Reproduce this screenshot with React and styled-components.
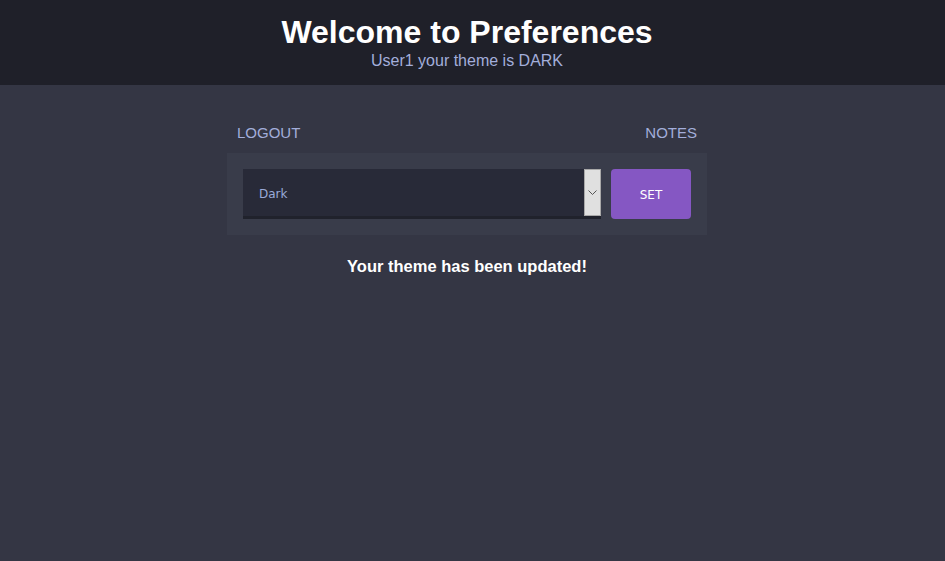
import React, { useState } from "react";
import styled, { createGlobalStyle } from "styled-components";

const GlobalStyle = createGlobalStyle`
  html, body {
    margin: 0;
    padding: 0;
    height: 100%;
    background: #343644;
    font-family: "Liberation Sans", Arial, sans-serif;
  }
  #root {
    min-height: 100%;
  }
`;

// content column sits 11px left of the window centre, as in the reference
const Header = styled.header`
  background: #1f2029;
  height: 85px;
  box-sizing: border-box;
  padding: 14px 11px 0 0;
  text-align: center;
`;

const Title = styled.h1`
  margin: 0;
  font-size: 32px;
  line-height: 37px;
  font-weight: bold;
  color: #ffffff;
`;

const Subtitle = styled.p`
  margin: 1px 0 0;
  font-size: 16px;
  line-height: 18px;
  color: #a3aedb;
`;

const Body = styled.div`
  padding-right: 11px;
`;

const Main = styled.main`
  width: 480px;
  margin: 0 auto;
  padding-top: 28px;
`;

const Nav = styled.nav`
  display: flex;
  justify-content: space-between;
  padding: 11px 10px 11px;
`;

const NavLink = styled.a`
  font-size: 15px;
  line-height: 18px;
  color: #a3aedb;
  text-decoration: none;
  cursor: pointer;
`;

const Panel = styled.form`
  display: flex;
  gap: 10px;
  padding: 16px;
  background: #393c4a;
`;

const SelectWrap = styled.div`
  position: relative;
  flex: 1;
  height: 50px;
  box-sizing: border-box;
  border-bottom: 3px solid #20222c;
  background: #282a38;
`;

const Select = styled.select`
  appearance: none;
  width: 100%;
  height: 100%;
  border: none;
  outline: none;
  background: transparent;
  padding: 2px 0 0 16px;
  font-family: "DejaVu Sans", Verdana, sans-serif;
  font-size: 12px;
  color: #9aaad8;
`;

const Arrow = styled.span`
  position: absolute;
  top: 0;
  right: 0;
  bottom: 0;
  width: 17px;
  box-sizing: border-box;
  border: 1px solid #a9a9a9;
  background: #e0e0e0;
  display: flex;
  align-items: center;
  justify-content: center;
  pointer-events: none;
`;

const SetButton = styled.button`
  width: 80px;
  height: 50px;
  border: none;
  border-radius: 4px;
  background: #8557c3;
  color: #ffffff;
  font-family: "DejaVu Sans", Verdana, sans-serif;
  font-size: 12px;
  padding-top: 2px;
  cursor: pointer;
`;

const Message = styled.p`
  margin: 22px 0 0;
  text-align: center;
  font-size: 16.5px;
  line-height: 18px;
  font-weight: bold;
  color: #ffffff;
`;

export default function App() {
  const [theme, setTheme] = useState("dark");

  const handleSubmit = (e) => {
    e.preventDefault();
  };

  return (
    <>
      <GlobalStyle />
      <Header>
        <Title>Welcome to Preferences</Title>
        <Subtitle>User1 your theme is DARK</Subtitle>
      </Header>
      <Body>
        <Main>
          <Nav>
            <NavLink>LOGOUT</NavLink>
            <NavLink>NOTES</NavLink>
          </Nav>
          <Panel onSubmit={handleSubmit}>
            <SelectWrap>
              <Select value={theme} onChange={(e) => setTheme(e.target.value)}>
                <option value="dark">Dark</option>
                <option value="light">Light</option>
              </Select>
              <Arrow>
                <svg width="9" height="5" viewBox="0 0 9 5">
                  <path d="M0.5 0.5 L4.5 4.5 L8.5 0.5" fill="none" stroke="#555" strokeWidth="1" />
                </svg>
              </Arrow>
            </SelectWrap>
            <SetButton type="submit">SET</SetButton>
          </Panel>
          <Message>Your theme has been updated!</Message>
        </Main>
      </Body>
    </>
  );
}
